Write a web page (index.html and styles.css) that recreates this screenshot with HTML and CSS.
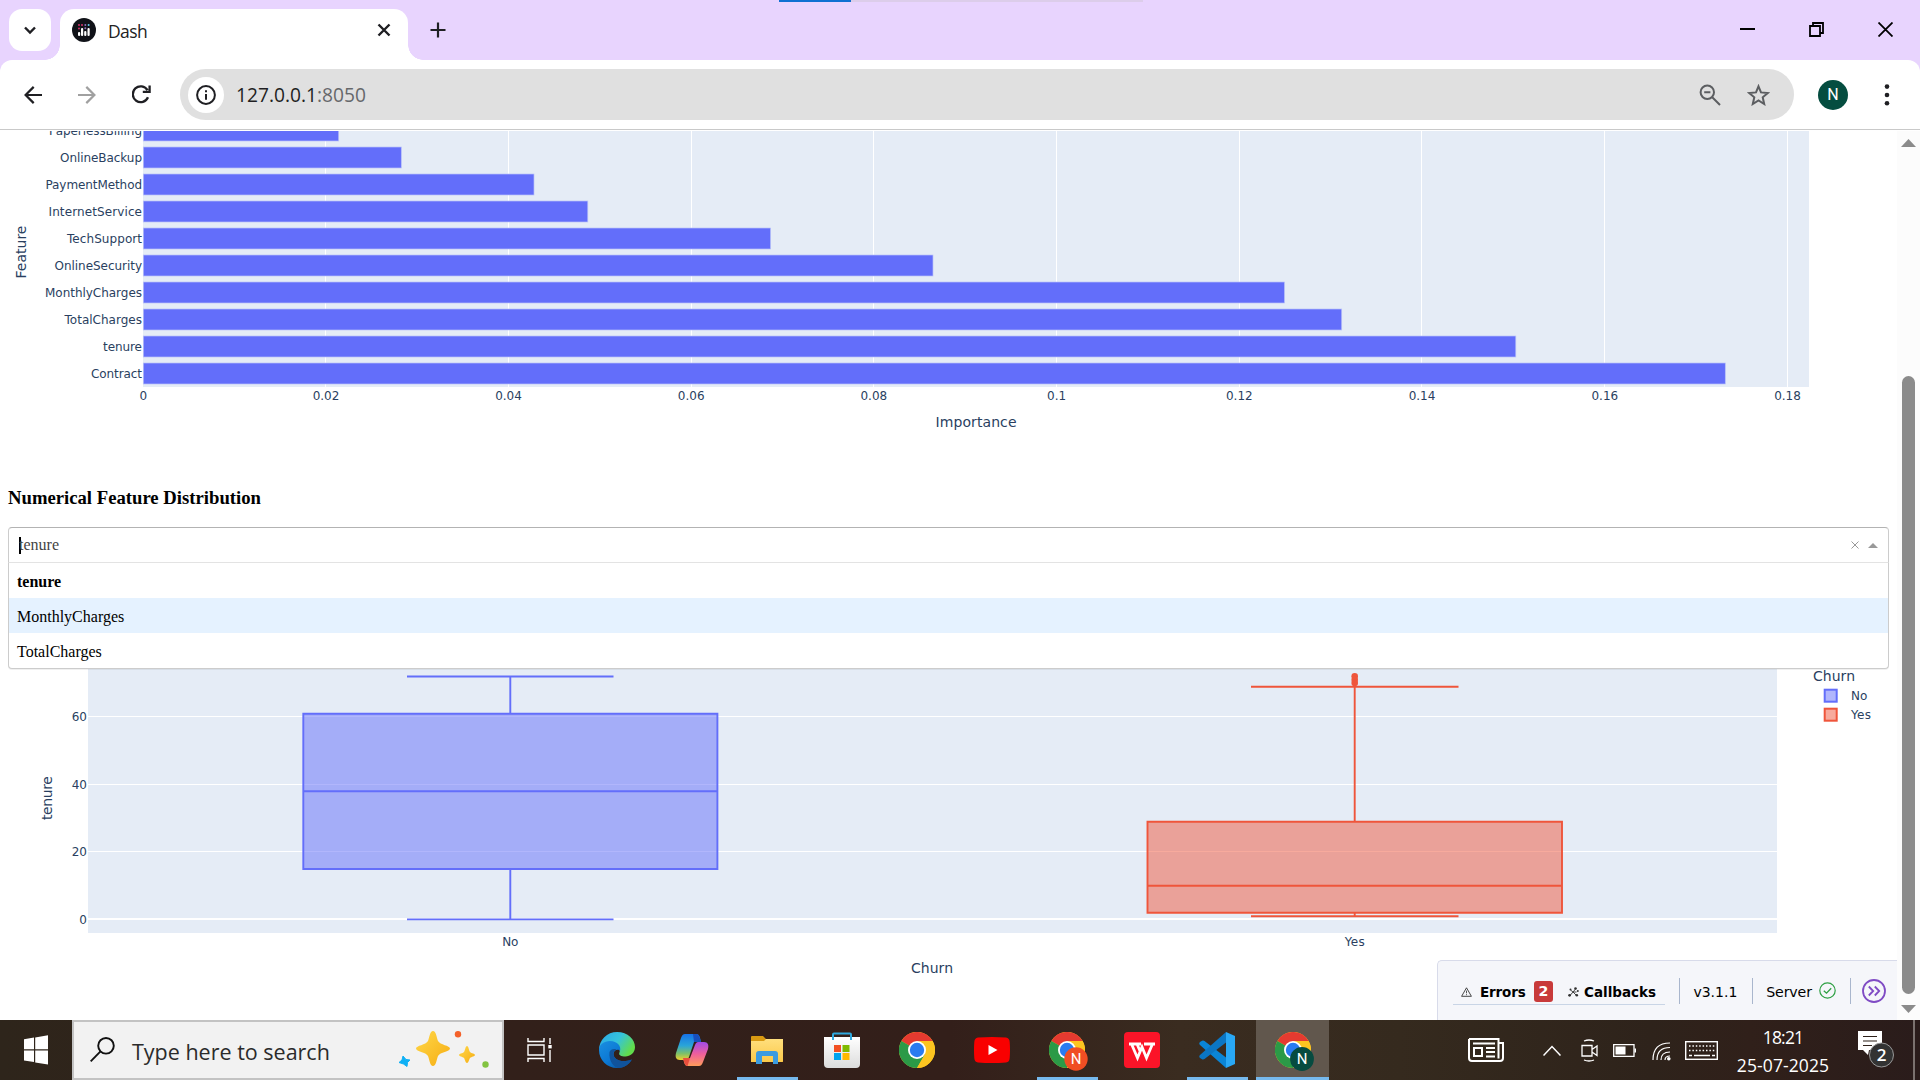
FILE: index.html
```
<!DOCTYPE html>
<html lang="en">
<head>
<meta charset="utf-8">
<title>Dash</title>
<link rel="stylesheet" href="styles.css">
</head>
<body>
<svg class="defs" aria-hidden="true">
  <defs>
    <linearGradient id="edgeTop" x1="0" y1="0" x2="1" y2="0.5"><stop offset="0" stop-color="#2aa6e8"/><stop offset=".55" stop-color="#35c3dc"/><stop offset="1" stop-color="#62dd4c"/></linearGradient>
    <linearGradient id="edgeLow" x1="0" y1="0" x2="1" y2="1"><stop offset="0" stop-color="#1b8fe0"/><stop offset=".5" stop-color="#0b78d4"/><stop offset="1" stop-color="#0d4a8c"/></linearGradient>
    <linearGradient id="copA" x1="0" y1="0" x2="0" y2="1"><stop offset="0" stop-color="#1672e8"/><stop offset=".45" stop-color="#2aa5d8"/><stop offset=".75" stop-color="#7cc06a"/><stop offset="1" stop-color="#f2cf2b"/></linearGradient>
    <linearGradient id="copB" x1="0" y1="0" x2="0" y2="1"><stop offset="0" stop-color="#a04be8"/><stop offset=".5" stop-color="#ee5f9c"/><stop offset="1" stop-color="#ff9c5a"/></linearGradient>
    <linearGradient id="star" x1="0" y1="0" x2="1" y2="1"><stop offset="0" stop-color="#ffd84a"/><stop offset="1" stop-color="#f6ad12"/></linearGradient>
    <linearGradient id="folder" x1="0" y1="0" x2="0" y2="1"><stop offset="0" stop-color="#ffdf7d"/><stop offset="1" stop-color="#fbc94a"/></linearGradient>
    <linearGradient id="bag" x1="0" y1="0" x2="0" y2="1"><stop offset="0" stop-color="#fff"/><stop offset="1" stop-color="#dcdcdc"/></linearGradient>
    <symbol id="chrome" viewBox="0 0 36 36">
      <circle cx="18" cy="18" r="18" fill="#fcc420"/>
      <path d="M18 18 2.4 9A18 18 0 0 1 33.6 9Z" fill="#e53a30"/>
      <path d="M18 18 2.4 9A18 18 0 0 0 18 36L25.8 22.5Z" fill="#2b9a47"/>
      <path d="M18 9H33.6A18 18 0 0 1 18 36L25.8 22.5Z" fill="#fcc420"/>
      <circle cx="18" cy="18" r="9" fill="#fff"/><circle cx="18" cy="18" r="7.2" fill="#2a7bf0"/>
    </symbol>
  </defs>
</svg>

<div class="screen">
  <header class="tabstrip">
    <div class="loader"></div>
    <button class="tab-search"><svg width="14" height="14" viewBox="0 0 14 14"><path d="M2 4.5 7 9.5 12 4.5" fill="none" stroke="#1f1f23" stroke-width="2.4"/></svg></button>
    <div class="tab">
      <svg width="24" height="24" viewBox="0 0 24 24"><circle cx="12" cy="12" r="12" fill="#101218"/><g fill="#fff"><rect x="6" y="14" width="2.2" height="4" rx="1"/><rect x="9" y="10" width="2.2" height="8" rx="1"/><rect x="12.2" y="13" width="2.2" height="5" rx="1"/><rect x="15.5" y="10" width="2.2" height="8" rx="1"/></g><g fill="#d6336c"><circle cx="7" cy="7" r="1"/><circle cx="7" cy="10.5" r="1"/><circle cx="10" cy="7" r="1"/></g><g fill="#8c6db8"><circle cx="13.3" cy="7" r="1"/><circle cx="13.3" cy="10.2" r="1"/></g><circle cx="16.6" cy="7" r="1" fill="#5ecbe8"/></svg>
      <span class="tab-title">Dash</span>
      <svg width="14" height="14" viewBox="0 0 14 14"><path d="M1.5 1.5 12.5 12.5M12.5 1.5 1.5 12.5" stroke="#1f1f23" stroke-width="2.4"/></svg>
    </div>
    <svg class="new-tab" width="16" height="16" viewBox="0 0 16 16"><path d="M8 .5V15.5M.5 8H15.5" stroke="#1f1f23" stroke-width="2.2"/></svg>
    <div class="window-controls">
      <svg width="15" height="16" viewBox="0 0 15 16"><path d="M0 7H15" stroke="#000" stroke-width="2"/></svg>
      <svg width="15" height="15" viewBox="0 0 15 15"><path d="M1 4H11V14H1ZM4 4V1H14V11H11" fill="none" stroke="#000" stroke-width="1.8"/></svg>
      <svg width="15" height="15" viewBox="0 0 15 15"><path d="M.5.5 14.5 14.5M14.5.5.5 14.5" stroke="#000" stroke-width="1.8"/></svg>
    </div>
  </header>

  <nav class="toolbar">
    <svg width="18" height="18" viewBox="0 0 18 18"><path d="M18 9H1.5M9.7 .9 1.6 9 9.7 17.1" fill="none" stroke="#1f1f23" stroke-width="2.2"/></svg>
    <svg width="18" height="18" viewBox="0 0 18 18"><path d="M0 9H16.5M8.3 .9 16.4 9 8.3 17.1" fill="none" stroke="#a0a0a0" stroke-width="2.2"/></svg>
    <svg width="19" height="19" viewBox="0 0 19 19"><path d="M16 12.3A7.9 7.9 0 1 1 15.5 5.2M17.6.6V6.9H10.8" fill="none" stroke="#1f1f23" stroke-width="2.3"/></svg>
    <div class="address">
      <span class="site-info"><svg width="20" height="20" viewBox="0 0 20 20"><circle cx="10" cy="10" r="8.9" fill="none" stroke="#1f1f23" stroke-width="2"/><path d="M10 9V14.8M10 5.2V7.3" stroke="#1f1f23" stroke-width="2"/></svg></span>
      <span class="url">127.0.0.1<i>:8050</i></span>
      <svg width="22" height="22" viewBox="0 0 22 22"><g fill="none" stroke="#5c5e61" stroke-width="2"><circle cx="8.3" cy="8.2" r="6.7"/><path d="M5.2 8.2H11.4M13 13 21 21"/></g></svg>
      <svg width="23" height="22" viewBox="0 0 23 22"><path d="M11.5 2.3 14 8.4 20.8 9 15.7 13.3 17.2 20 11.5 16.5 5.8 20 7.3 13.3 2.2 9 9 8.4Z" fill="none" stroke="#5c5e61" stroke-width="2"/></svg>
    </div>
    <span class="avatar">N</span>
    <svg width="6" height="22" viewBox="0 0 6 22"><g fill="#1f1f23"><circle cx="3" cy="2.6" r="2.3"/><circle cx="3" cy="11" r="2.3"/><circle cx="3" cy="19.3" r="2.3"/></g></svg>
  </nav>

  <div class="viewport">
    <main class="page">
      <svg class="plot" width="1889" height="339" viewBox="0 131 1889 339">
        <rect x="143" y="120" width="1666" height="267" fill="#e5ecf6"/>
        <path d="M325.5 131V387M508.5 131V387M691.5 131V387M873.5 131V387M1056.5 131V387M1239.5 131V387M1421.500 131V387M1604.5 131V387M1787.5 131V387" stroke="#fff"/>
        <g fill="#636efa" stroke="#b9c2f8" stroke-width=".7">
          <rect x="143.3" y="120" width="195.4" height="21"/>
          <rect x="143.3" y="147" width="258" height="21"/>
          <rect x="143.3" y="174" width="390.7" height="21"/>
          <rect x="143.3" y="201" width="444.5" height="21"/>
          <rect x="143.3" y="228" width="627.3" height="21"/>
          <rect x="143.3" y="255" width="789.7" height="21"/>
          <rect x="143.3" y="282" width="1141.2" height="21"/>
          <rect x="143.3" y="309" width="1198.4" height="21"/>
          <rect x="143.3" y="336" width="1372.5" height="21"/>
          <rect x="143.3" y="363" width="1582" height="21"/>
        </g>
        <g class="tick end">
          <text x="142" y="135" textLength="93">PaperlessBilling</text>
          <text x="142" y="162" textLength="82">OnlineBackup</text>
          <text x="142" y="189" textLength="96.5">PaymentMethod</text>
          <text x="142" y="216" textLength="93.5">InternetService</text>
          <text x="142" y="243" textLength="75">TechSupport</text>
          <text x="142" y="270" textLength="87.5">OnlineSecurity</text>
          <text x="142" y="297" textLength="97">MonthlyCharges</text>
          <text x="142" y="324" textLength="77.500">TotalCharges</text>
          <text x="142" y="351" textLength="39">tenure</text>
          <text x="142" y="378" textLength="51">Contract</text>
        </g>
        <g class="tick mid">
          <text x="143.3" y="400">0</text><text x="326" y="400">0.02</text><text x="508.5" y="400">0.04</text><text x="691.2" y="400">0.06</text><text x="873.8" y="400">0.08</text><text x="1056.6" y="400">0.1</text><text x="1239.3" y="400">0.12</text><text x="1422" y="400">0.14</text><text x="1604.8" y="400">0.16</text><text x="1787.5" y="400">0.18</text>
        </g>
        <g class="axis mid">
          <text x="976" y="427" textLength="81">Importance</text>
          <text transform="translate(26 252) rotate(-90)" textLength="53">Feature</text>
        </g>
      </svg>

      <h3 class="section-title">Numerical Feature Distribution</h3>

      <div class="select">
        <div class="select-control">
          <span class="caret"></span><span class="value">tenure</span>
          <svg width="8" height="8" viewBox="0 0 8 8"><path d="M.5.5 7.5 7.5M7.5.5.5 7.5" stroke="#999" stroke-width="1"/></svg>
          <svg width="10" height="5" viewBox="0 0 10 5"><path d="M0 5 5 0 10 5Z" fill="#999"/></svg>
        </div>
        <ul class="select-menu">
          <li class="selected">tenure</li>
          <li class="focused">MonthlyCharges</li>
          <li>TotalCharges</li>
        </ul>
      </div>

      <svg class="plot" width="1889" height="457" viewBox="0 563 1889 457">
        <rect x="88" y="600" width="1689" height="333" fill="#e5ecf6"/>
        <path d="M88 716.5H1777M88 784.5H1777M88 851.5H1777" stroke="#fff"/>
        <path d="M88 919H1777" stroke="#fff" stroke-width="2"/>
        <g fill="#636efa" fill-opacity=".5" stroke="#636efa" stroke-width="1.900">
          <path d="M303.300 713.700H717.400V869H303.300ZM303.300 791.200H717.400M510.3 713.700V676.5M510.3 869V919.400M407 676.5H613.500M407 919.400H613.500"/>
        </g>
        <g fill="#ef553b" fill-opacity=".5" stroke="#ef553b" stroke-width="1.900">
          <path d="M1147.5 821.800H1562V912.7H1147.5ZM1147.5 885.7H1562M1354.7 821.800V686.700M1354.7 912.700V916.300M1251 686.700H1458.5M1251 916.3H1458.5"/>
        </g>
        <g fill="#ef553b"><circle cx="1354.7" cy="676.300" r="3.3"/><circle cx="1354.7" cy="679.700" r="3.3"/><circle cx="1354.7" cy="683" r="3.3"/></g>
        <g class="tick end"><text x="87" y="720.5">60</text><text x="87" y="788.5">40</text><text x="87" y="856">20</text><text x="87" y="923.5">0</text></g>
        <g class="tick mid"><text x="510.3" y="946">No</text><text x="1354.7" y="946" textLength="20">Yes</text></g>
        <g class="axis mid">
          <text x="932" y="973" textLength="42">Churn</text>
          <text transform="translate(52 798) rotate(-90)" textLength="44">tenure</text>
        </g>
        <text class="axis" x="1813" y="681" textLength="42">Churn</text>
        <rect x="1824.700" y="689.700" width="12" height="12" fill="#b1b6fc" stroke="#636efa" stroke-width="2"/>
        <rect x="1824.700" y="708.700" width="12" height="12" fill="#f7aa9d" stroke="#ef553b" stroke-width="2"/>
        <g class="tick"><text x="1851" y="700">No</text><text x="1851" y="719" textLength="20">Yes</text></g>
      </svg>

      <aside class="devtools">
        <div class="devtools-main">
          <svg width="11" height="10" viewBox="0 0 11 10"><path d="M5.5.8 10.4 9.3H.6Z" fill="none" stroke="#333" stroke-width=".9"/><path d="M5.5 3.6V6.3M5.5 7.2V8.2" stroke="#555"/></svg>
          <b class="errors">Errors</b><span class="count">2</span>
          <svg width="11" height="10" viewBox="0 0 11 10"><g fill="none" stroke="#333" stroke-width=".9"><path d="M2.5 3 5 5H8.5M5 5 2 8.5M5 5 8 1.5M5 5 8.5 8.5"/></g><g fill="#333"><circle cx="2.500" cy="2.500" r="1"/><circle cx="1.6" cy="8.3" r="1.4"/><circle cx="7.500" cy="1.5" r="1.3"/><circle cx="9.800" cy="4" r="1"/><circle cx="8.8" cy="8.2" r="1.3"/></g></svg>
          <b class="callbacks">Callbacks</b>
        </div>
        <span class="version">v3.1.1</span>
        <span class="server">Server <svg width="17" height="17" viewBox="0 0 17 17"><circle cx="8.5" cy="8.5" r="7.7" fill="none" stroke="#2ea043" stroke-width="1.2"/><path d="M4.8 8.7 7.5 11.2 12.2 6.2" fill="none" stroke="#2ea043" stroke-width="1.3"/></svg></span>
        <span class="collapse"><svg width="24" height="24" viewBox="0 0 24 24"><g fill="none" stroke="#7f4bc4" stroke-width="1.8"><circle cx="12" cy="12" r="11"/><path d="M6.8 7.5 11.2 12 6.8 16.5M12.8 7.5 17.2 12 12.8 16.5"/></g></svg></span>
      </aside>
    </main>
    <div class="scrollbar">
      <svg width="15" height="8" viewBox="0 0 15 8"><path d="M0 8 7.5 0 15 8Z" fill="#8b8b8b"/></svg>
      <div class="thumb"></div>
      <svg width="15" height="8" viewBox="0 0 15 8"><path d="M0 0 7.5 8 15 0Z" fill="#8b8b8b"/></svg>
    </div>
  </div>

  <footer class="taskbar">
    <div class="start"><svg width="24" height="30" viewBox="0 0 24 30"><path d="M0 4.2 10 2.6V14.2H0ZM11.2 2.4 24 .3V14.2H11.2ZM0 15.5H10V27L0 25.4ZM11.2 15.5H24V29.6L11.2 27.4Z" fill="#fff"/></svg></div>
    <div class="search">
      <svg width="25" height="25" viewBox="0 0 25 25"><g fill="none" stroke="#111" stroke-width="1.9"><circle cx="16" cy="8.8" r="7.8"/><path d="M10.5 14.3.7 24.3"/></g></svg>
      <span class="placeholder">Type here to search</span>
      <svg width="91" height="38" viewBox="0 0 91 38"><path d="M35 0C38 0 38.500 6 40 10C42 14 52 14.500 52 17.500C52 20.500 42 21 40 25C38.500 29 38 35 35 35C32 35 31.500 29 30 25C28 21 18 20.500 18 17.500C18 14.500 28 14 30 10C31.500 6 32 0 35 0Z" fill="url(#star)"/><path d="M69 15C70.500 15 70.800 19 72 21C73.500 22.500 77 22.600 77 24C77 25.400 73.500 25.600 72 27C70.800 29 70.500 32 69 32C67.500 32 67.200 29 66 27C64.500 25.600 61 25.400 61 24C61 22.600 64.500 22.500 66 21C67.200 19 67.500 15 69 15Z" fill="url(#star)"/><path d="M5 25 8 28.500 12 29 9.500 31.500 9 35.500 5.500 33 1 31.500 4 29Z" fill="#0fb0f5" stroke="#0fb0f5" stroke-linejoin="round"/><circle cx="60" cy="3.300" r="3.200" fill="#f4612a"/><circle cx="87.500" cy="33.500" r="3.200" fill="#82c341"/></svg>
    </div>
    <div class="apps">
      <span><svg class="task-view" width="26" height="24" viewBox="0 0 26 24"><g fill="none" stroke="#fff" stroke-width="1.4"><path d="M1 0V3.500H17V0M1 7H17V17H1ZM1 24V20.500H17V24M23 0V6M23 12V24"/></g><rect x="21.300" y="7" width="3.400" height="3.400" fill="#fff"/></svg></span>
      <span><svg width="36" height="36" viewBox="0 0 36 36"><path d="M0 18A18 18 0 0 1 18 0C29 0 36 7.500 36 15C36 21 31 24.500 26.500 24.500C22 24.500 19.500 23 20.300 21C22.500 16.500 18 11 12 11C6 11 1.500 14 0 18Z" fill="url(#edgeTop)"/><path d="M0 18C0 12.500 5 9 11 9C18.500 9 22.500 14.500 21 19C20 16.500 14.500 17.500 14.500 22C14.500 27 21 31.500 32.800 27.500C30 33 24.500 36 18 36C8 36 0 28 0 18Z" fill="url(#edgeLow)"/><path d="M10.500 20C9.500 29 15 35.500 19.500 36C25.500 35.500 30 32.500 32.800 27.500C22 31.500 14.500 27 14.500 22C14.500 19.500 15.800 18 17.500 17.500C14.500 16.500 11.500 17.500 10.500 20Z" fill="#10539c"/></svg></span>
      <span><svg width="34" height="32" viewBox="0 0 34 32"><path d="M10 0H21C23.500 0 24.300 1.600 25 4L26 8H19L14 23C13 25.500 12 26 9.500 26H5C1 26 0 23 1 19L6 4C7 1.500 8 0 10 0Z" fill="url(#copA)"/><path d="M24 32H13C10.500 32 9.700 30.400 9 28L8 24H15L20 11C21 8.500 22 8 24.500 8H29C33 8 34 11 33 15L28 28C27 30.500 26 32 24 32Z" fill="url(#copB)"/><path d="M18 0H21C23.500 0 24.300 1.600 26 8H19Z" fill="#174fbd"/><path d="M8 24H15L12.500 32C10.500 32 9.700 30.400 8 24Z" fill="#e94e3c"/></svg></span>
      <span class="running"><svg width="32" height="28" viewBox="0 0 32 28"><path d="M0 1Q0 0 1 0H12L15 3H31Q32 3 32 4V26H0Z" fill="#d99a12"/><path d="M0 5H13L15 3H32V25Q32 26 31 26H0Z" fill="url(#folder)"/><path d="M5 28V18Q5 15 8 15H24Q27 15 27 18V28H22V20H11V28Z" fill="#3b9be0"/></svg></span>
      <span><svg width="36" height="36" viewBox="0 0 36 36"><path d="M0 5H36V32Q36 36 32 36H4Q0 36 0 32Z" fill="url(#bag)"/><path d="M9 8V2.500Q9 1.500 10 1.500H26Q27 1.500 27 2.500V8" fill="none" stroke="#2fa9de" stroke-width="2"/><path d="M10 13H17V20H10Z" fill="#f25022"/><path d="M18.500 13H25.500V20H18.500Z" fill="#7fba00"/><path d="M10 21H17V28H10Z" fill="#00a4ef"/><path d="M18.500 21H25.500V28H18.500Z" fill="#ffb900"/></svg></span>
      <span><svg width="36" height="36"><use href="#chrome"/></svg></span>
      <span><svg width="36" height="26" viewBox="0 0 36 26"><path d="M4 .5Q18-.5 32 .5Q35.500 1 35.700 5Q36.300 13 35.700 21Q35.500 25 32 25.500Q18 26.500 4 25.500Q.5 25 .3 21Q-.3 13 .3 5Q.5 1 4 .5Z" fill="#f90000"/><path d="M14.500 8 23.500 13 14.500 18Z" fill="#fff"/></svg></span>
      <span class="running"><svg class="badged" width="39" height="39" viewBox="0 0 39 39"><use href="#chrome" width="36" height="36"/><circle cx="27" cy="27" r="11.700" fill="#f04e23"/><text class="badge-letter" x="27" y="32">N</text></svg></span>
      <span><svg width="36" height="36" viewBox="0 0 36 36"><rect width="36" height="36" rx="4" fill="#fb1428"/><path d="M5 12H17M20 12H31M7.500 12 13.500 26 18 15 22.500 26 28.500 12M13 12 16 19" fill="none" stroke="#fff" stroke-width="2.800"/></svg></span>
      <span class="running"><svg width="36" height="36" viewBox="0 0 36 36"><path d="M27 36 1 13Q-.5 11.500 1 10L3 8.800Q4.300 8.200 5.500 9L27 25.500Z" fill="#0a85d6"/><path d="M27 0 1 23Q-.5 24.500 1 26L3 27.200Q4.300 27.800 5.500 27L27 10.500Z" fill="#0b76c4"/><path d="M27 0 36 4V32L27 36Z" fill="#29a8f5"/></svg></span>
      <span class="active"><svg class="badged" width="39" height="39" viewBox="0 0 39 39"><use href="#chrome" width="36" height="36"/><circle cx="27" cy="27" r="11.900" fill="#064b40"/><text class="badge-letter" x="27" y="32">N</text></svg></span>
    </div>
    <div class="tray">
      <svg width="36" height="24" viewBox="0 0 36 24"><path d="M1 1H30.500V20.500M30.500 5H35V20Q35 23 32 23H4Q1 23 1 20V1" fill="none" stroke="#fff" stroke-width="2"/><path d="M5 5.500H27M18 10H27M18 14H27M18 18.500H27M6 10H14V18H6Z" fill="none" stroke="#fff" stroke-width="2"/></svg>
      <svg class="chevron" width="18" height="11" viewBox="0 0 18 11"><path d="M.5 10.500 9 1.500 17.500 10.500" fill="none" stroke="#fff" stroke-width="1.500"/></svg>
      <svg class="camera" width="17" height="23" viewBox="0 0 17 23"><path d="M1 6.500H11V17H1ZM11 10.500 16 7V16.500L11 13M3 2Q8 0 13 2M3 21Q8 23 13 21" fill="none" stroke="#fff" stroke-width="1.300"/></svg>
      <svg class="battery" width="23" height="13" viewBox="0 0 23 13"><path d="M.7.700H21V12.300H.7Z" fill="none" stroke="#fff" stroke-width="1.300"/><rect x="2.500" y="2.500" width="10" height="8" fill="#fff"/><rect x="21.500" y="4.500" width="1.500" height="4" fill="#fff"/></svg>
      <svg class="wifi" width="19" height="19" viewBox="0 0 19 19"><g fill="none" stroke="#fff" stroke-width="1.200"><path d="M1 18Q1 1 18 1M5 18Q5 5.500 18 5.500M9 18Q9 10 18 10M13 18Q13 14 18 14"/></g><circle cx="16.800" cy="16.800" r="1.800" fill="#fff"/></svg>
      <svg class="keyboard" width="33" height="19" viewBox="0 0 33 19"><rect x=".7" y=".7" width="31.600" height="17.600" fill="none" stroke="#fff" stroke-width="1.400"/><path d="M4 5H30M4 9.500H30" stroke="#fff" stroke-width="1.300" stroke-dasharray="1.500 1.900"/><path d="M4 14.500H7M9 14.500H25M27 14.500H30" stroke="#fff" stroke-width="1.300"/></svg>
      <div class="clock"><span class="time">18:21</span><span class="date">25-07-2025</span></div>
      <svg class="notice" width="36" height="38" viewBox="0 0 36 38"><path d="M0 0H24V19H11L10 24 5 19H0Z" fill="#fff"/><path d="M5 5.500H19M5 10H19M5 14.500H14" stroke="#2d2019" stroke-width="1.200"/><circle cx="23.500" cy="24" r="12" fill="#333" stroke="#999" stroke-width="1"/><text class="notice-count" x="23.500" y="30">2</text></svg>
      <span class="show-desktop"></span>
    </div>
  </footer>
</div>
</body>
</html>
```
FILE: styles.css
```
* { box-sizing: border-box; }
body { margin: 0; background: #fff; }
svg { display: block; flex: none; }
.defs { position: absolute; width: 0; height: 0; }
.screen {
  width: 1920px; height: 1080px; overflow: hidden;
  display: grid; grid-template-rows: 60px 71px 889px 60px;
  background: linear-gradient(#e8d4fe 90px, #fff 90px);
  font-family: "Open Sans", "Noto Sans", sans-serif;
}

/* Browser frame */
.tabstrip {
  position: relative; display: flex; align-items: flex-start;
  padding: 9px 27px 0 9px; background: #e8d4fe;
}
.loader {
  position: absolute; left: 779px; top: 0; width: 364px; height: 2px;
  background: linear-gradient(90deg, #0f70d2 72px, #dccdea 72px);
}
.tab-search {
  width: 42px; height: 42px; padding: 0; border: 0; border-radius: 13px;
  background: #fff; display: grid; place-items: center;
}
.tab {
  position: relative; width: 348px; height: 51px; margin-left: 9px;
  padding: 0 17px 9px 12px; border-radius: 14px 14px 0 0; background: #fff;
  display: flex; align-items: center; gap: 12px;
}
.tab::before, .tab::after {
  content: ""; position: absolute; bottom: 0; width: 15px; height: 15px;
}
.tab::before { left: -15px; background: radial-gradient(circle at 0 0, transparent 14.5px, #fff 15px); }
.tab::after { right: -15px; background: radial-gradient(circle at 100% 0, transparent 14.5px, #fff 15px); }
.tab-title { flex: 1; padding-top: 1px; font-size: 17.5px; line-height: 24px; letter-spacing: -.6px; color: #222; }
.new-tab { margin: 13px 0 0 22px; }
.window-controls { margin: 13px 0 0 auto; display: flex; gap: 54px; }

.toolbar {
  display: flex; align-items: center; gap: 36px; padding: 0 30px 2px 24px;
  border-radius: 12px 12px 0 0; background: #fff;
  box-shadow: inset 0 -1px #fff, inset 0 -2px #c9c9c9;
}
.address {
  flex: none; width: 1614px; height: 51px; margin-left: -7px; padding: 0 24px 0 8px;
  border-radius: 26px; background: #e0e0e0; display: flex; align-items: center;
}
.site-info { width: 36px; height: 36px; border-radius: 50%; background: #fff; display: grid; place-items: center; }
.url { flex: 1; margin-left: 12px; font-size: 19.200px; color: #1f1f23; }
.url i { font-style: normal; color: #66686b; }
.address svg + svg { margin-left: 26px; }
.avatar {
  width: 30px; height: 30px; margin-left: -12px; border-radius: 50%; background: #054d40; color: #fff;
  display: grid; place-items: center; font: 16px Roboto, sans-serif;
}

/* Page */
.viewport { display: flex; overflow: hidden; background: #fff; }
.page { position: relative; width: 1897px; }
.plot { overflow: hidden; font-family: "DejaVu Sans", sans-serif; fill: #2a3f5f; }
.plot .tick { font-size: 12px; }
.plot .axis { font-size: 14px; }
.end { text-anchor: end; }
.mid { text-anchor: middle; }
.section-title {
  margin: 0; padding: 17px 8px 0; height: 57px;
  font: bold 18.700px/22px "Liberation Serif", serif; color: #000;
}
.select {
  position: relative; z-index: 1; width: 1881px; height: 36px; margin-left: 8px;
  font: 16px "Liberation Serif", serif;
}
.select-control {
  display: flex; align-items: center; gap: 9px; height: 36px; padding: 0 10px;
  border: 1px solid #ccc; border-top-color: #b3b3b3; border-bottom-color: #e3e3e3;
  border-radius: 4px 4px 0 0; background: #fff; color: #444;
}
.caret { width: 2px; height: 17px; margin-right: -11px; background: #000; }
.select-control .value { flex: 1; }
.select-menu {
  position: absolute; left: 0; top: 36px; width: 1881px; margin: 0; padding: 0; list-style: none;
  border: 1px solid #ccc; border-top: 0; border-radius: 0 0 4px 4px; background: #fff;
  box-shadow: 0 1px 0 rgba(0,0,0,.06); overflow: hidden;
}
.select-menu li { height: 35px; padding: 0 8px; line-height: 37px; color: #000; }
.select-menu .selected { font-weight: bold; }
.select-menu .focused { background: #e5f2ff; }

.devtools {
  position: absolute; right: 0; bottom: 0; width: 460px; height: 60px; padding: 0 11px 0 15px;
  border: 1px solid #d8dbea; border-width: 1px 0 0 1px; border-radius: 5px 0 0 0; background: #f5f6fa;
  display: flex; align-items: center; font: 14.200px "DejaVu Sans", sans-serif; color: #000;
}
.devtools-main {
  width: 213px; height: 26px; margin-top: 3px; padding-left: 8px; border-bottom: 1px solid #c9d5e6;
  display: flex; align-items: center;
}
.errors { width: 47px; margin: 0 7px 0 8px; font-size: 13.500px; letter-spacing: -.15px; white-space: nowrap; }
.count {
  width: 19px; height: 21px; margin-right: 15px; border-radius: 3px; background: #c83a3a; color: #fff;
  font-weight: bold; line-height: 21px; text-align: center;
}
.callbacks { margin-left: 5px; font-size: 13.500px; letter-spacing: 0; white-space: nowrap; }
.version, .server, .collapse { height: 26px; border-left: 1px solid #a9b6cd; display: flex; align-items: center; }
.version { width: 73px; margin-left: 14px; padding-left: 13px; padding-top: 2px; font-size: 14px; }
.server { width: 98px; padding: 2px 0 0 13px; gap: 7px; letter-spacing: -.15px; }
.server svg { margin-top: -2px; }
.collapse { padding-left: 11px; }

.scrollbar {
  width: 23px; padding: 8px 0 7px; background: #fcfcfc;
  display: flex; flex-direction: column; align-items: center;
}
.thumb { width: 13px; height: 618px; margin: 229px 0 auto; border-radius: 7px; background: #8b8b8b; }

/* Taskbar */
.taskbar {
  display: flex;
  background: linear-gradient(90deg, #2e251b 0, #32201a 500px, #331f1a 950px, #3a2c20 1180px, #352a1e 1400px, #2e231b 1650px, #30201a 1750px, #2a1c1b 1920px);
}
.start { width: 72px; display: grid; place-items: center; }
.search {
  width: 432px; padding: 0 13px 0 16px; border: 2px solid #c3c3c3; background: #f2f2f2;
  display: flex; align-items: center;
}
.search > svg:first-child { margin-top: -2px; }
.placeholder { flex: 1; margin-left: 17px; padding-top: 3px; font-size: 21.500px; color: #2b2b2b; white-space: nowrap; }
.apps { display: flex; }
.apps span { width: 75px; display: grid; place-items: center; }
.apps .task-view { margin-left: -3px; }
.apps .running { background: linear-gradient(#76b9ed, #76b9ed) 8px 100% / 61px 3px no-repeat; }
.apps .active { width: 73px; margin-left: 2px; background: linear-gradient(#76b9ed, #76b9ed) 0 100% / 100% 3px no-repeat, #61574d; }
.badged { margin: 3px 0 0 3px; }
.badge-letter { font: 15px Roboto, sans-serif; fill: #fff; text-anchor: middle; }
.tray { margin-left: auto; display: flex; align-items: center; }
.chevron { margin-left: 39px; }
.camera { margin-left: 20px; }
.battery { margin-left: 15px; }
.wifi { margin: 3px 0 0 16px; }
.keyboard { margin-left: 14px; }
.clock {
  width: 130px; display: flex; flex-direction: column; align-items: center;
  color: #fff; font-size: 17.500px; line-height: 28px;
}
.time { letter-spacing: -.8px; padding-top: 1px; }
.date { letter-spacing: .1px; }
.notice { margin: 0 0 0 10px; }
.notice-count { font: 600 17px "Open Sans", sans-serif; fill: #fff; text-anchor: middle; }
.show-desktop { width: 2px; height: 60px; margin: 0 5px 0 19px; background: #7b726f; }
```
